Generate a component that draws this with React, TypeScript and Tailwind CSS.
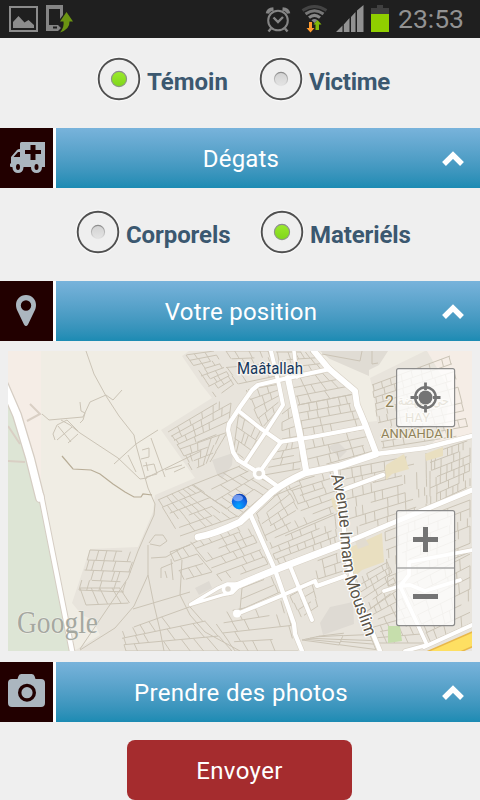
import React from "react";

type Pt = [number, number];

function RadioOption({ label, checked, className, textClass }: { label: string; checked: boolean; className: string; textClass: string }) {
  const id = label.replace(/[^a-z]/gi, "");
  return (
    <label className={`flex h-[46px] shrink-0 items-center ${className}`}>
      <svg width="46" height="46" viewBox="0 0 46 46" className="shrink-0">
        <defs>
          <linearGradient id={`dot${id}`} x1="0" y1="0" x2="0" y2="1">
            <stop offset="0" stopColor={checked ? "#9bea2c" : "#d2d2d2"} />
            <stop offset="1" stopColor={checked ? "#7fd61a" : "#e4e4e4"} />
          </linearGradient>
          <linearGradient id={`edge${id}`} x1="0" y1="0" x2="0" y2="1">
            <stop offset="0" stopColor="#8c8c8c" />
            <stop offset="1" stopColor={checked ? "#8a9a80" : "#e4e4e4"} />
          </linearGradient>
        </defs>
        <circle cx="23" cy="23" r="22.4" fill="#fafafa" />
        <circle cx="23" cy="23" r="20.300" fill="#efefef" stroke="#505050" strokeWidth="1.900" />
        <circle cx="23" cy="23" r={checked ? 7.6 : 6.6} fill={`url(#dot${id})`} stroke={`url(#edge${id})`} strokeWidth="1.100" />
      </svg>
      <span className={`relative top-[3px] ml-[5px] whitespace-nowrap text-[24px] leading-none font-bold text-[#3b5870] ${textClass}`}>{label}</span>
    </label>
  );
}

function SectionBar({ title, icon, textClass }: { title: string; icon: React.ReactNode; textClass: string }) {
  return (
    <div className="flex h-[60px] shrink-0 bg-white">
      <div className="w-[53px] shrink-0 bg-[#220000]">{icon}</div>
      <div className="ml-[3px] flex flex-1 items-center bg-gradient-to-b from-[#78b3db] to-[#1b8bb3]">
        <h2 className={`w-[370px] whitespace-nowrap pt-[2px] text-center text-[24px] leading-none font-normal text-white ${textClass}`}>{title}</h2>
        <svg width="54" height="24" viewBox="0 0 54 24">
          <path d="M18 18 27 9 36 18" fill="none" stroke="#fff" strokeWidth="5.400" />
        </svg>
      </div>
    </div>
  );
}

const AmbulanceIcon = (
  <svg width="53" height="60" viewBox="0 0 53 60">
    <path d="M20 15.500q0-1.500 1.500-1.500H45V39H11q-1 0-1-1v-2l1-1v-6l6-7q1-1 3-1z" fill="#abb6bf" />
    <path d="M20 24v5h-6.500l4.500-5zM30.500 17h5v5H41v4h-5.500v6h-5v-6H25v-4h5.500z" fill="#220000" />
    <g fill="#abb6bf">
      <circle cx="18" cy="39.500" r="5.500" />
      <circle cx="36.500" cy="39.500" r="5.500" />
    </g>
    <ellipse cx="18" cy="39" rx="2" ry="3" fill="#220000" />
    <ellipse cx="36.500" cy="39" rx="2" ry="3" fill="#220000" />
  </svg>
);

const PinIcon = (
  <svg width="53" height="60" viewBox="0 0 53 60">
    <path fillRule="evenodd" d="M26 14c-6 0-10 4.500-10 10 0 3 1 5 2 7l6 12.500q2 3 4 0L34 31c1-2 2-4 2-7 0-5.500-4-10-10-10zm0 5.300a5.200 5.200 0 1 1 0 10.400 5.200 5.200 0 0 1 0-10.400z" fill="#abb6bf" />
  </svg>
);

const CameraIcon = (
  <svg width="53" height="60" viewBox="0 0 53 60">
    <path d="M12 17h5.500l1-3q.7-2 3-2h10q2.300 0 3 2l1 3H41q4 0 4 4v20q0 4-4 4H12q-4 0-4-4V21q0-4 4-4z" fill="#abb6bf" />
    <circle cx="27" cy="30.700" r="7.300" fill="#abb6bf" stroke="#220000" strokeWidth="3.400" />
  </svg>
);

/** Each district is a quad (clockwise from top-left) with its row and column counts. */
const districts: { q: [Pt, Pt, Pt, Pt]; n: number; m: number }[] = [
  { q: [[186, 355], [214, 351], [234, 384], [216, 397]], n: 8, m: 3 },
  { q: [[214, 351], [268, 351], [276, 376], [238, 384]], n: 4, m: 5 },
  { q: [[168, 432], [232, 394], [228, 430], [180, 449]], n: 4, m: 6 },
  { q: [[180, 449], [228, 432], [210, 462], [192, 470]], n: 3, m: 5 },
  { q: [[246, 390], [280, 384], [282, 405], [262, 428]], n: 4, m: 3 },
  { q: [[238, 415], [262, 431], [246, 460], [233, 450]], n: 3, m: 3 },
  { q: [[276, 352], [312, 352], [328, 369], [280, 377]], n: 3, m: 6 },
  { q: [[291, 379], [330, 372], [354, 394], [298, 405]], n: 3, m: 5 },
  { q: [[298, 405], [355, 394], [365, 426], [302, 437]], n: 4, m: 6 },
  { q: [[302, 440], [366, 429], [373, 451], [309, 469]], n: 3, m: 6 },
  { q: [[282, 414], [295, 404], [300, 436], [282, 439]], n: 3, m: 2 },
  { q: [[281, 444], [300, 440], [304, 468], [264, 475]], n: 4, m: 3 },
  { q: [[192, 485], [240, 466], [274, 486], [238, 517]], n: 4, m: 6 },
  { q: [[158, 500], [192, 485], [238, 516], [180, 536]], n: 5, m: 7 },
  { q: [[190, 542], [246, 521], [268, 564], [222, 581]], n: 6, m: 6 },
  { q: [[170, 552], [190, 545], [212, 572], [183, 580]], n: 3, m: 3 },
  { q: [[256, 514], [286, 486], [307, 524], [267, 541]], n: 5, m: 4 },
  { q: [[288, 484], [332, 471], [341, 510], [307, 524]], n: 6, m: 4 },
  { q: [[268, 543], [341, 512], [344, 541], [278, 565]], n: 4, m: 9 },
  { q: [[340, 470], [426, 453], [427, 512], [347, 540]], n: 7, m: 8 },
  { q: [[372, 385], [450, 356], [470, 434], [382, 448]], n: 10, m: 8 },
  { q: [[430, 454], [470, 440], [470, 486], [430, 505]], n: 6, m: 7 },
  { q: [[385, 532], [470, 500], [470, 552], [388, 586]], n: 6, m: 8 },
  { q: [[242, 588], [273, 576], [280, 592], [240, 610]], n: 2, m: 2 },
  { q: [[210, 615], [284, 600], [298, 651], [235, 651]], n: 4, m: 5 },
  { q: [[314, 562], [344, 551], [346, 570], [318, 579]], n: 2, m: 3 },
  { q: [[290, 596], [312, 584], [318, 606], [300, 618]], n: 3, m: 3 },
  { q: [[302, 640], [320, 636], [368, 630], [376, 650]], n: 2, m: 4 },
  { q: [[355, 580], [388, 562], [398, 588], [366, 612]], n: 5, m: 5 },
  { q: [[366, 612], [399, 589], [425, 643], [378, 643]], n: 6, m: 5 },
  { q: [[405, 588], [470, 554], [470, 624], [430, 642]], n: 6, m: 5 },
  { q: [[120, 632], [192, 606], [232, 651], [126, 651]], n: 3, m: 7 },
  { q: [[90, 550], [138, 552], [124, 592], [79, 590]], n: 4, m: 5 },
  { q: [[80, 588], [120, 588], [130, 603], [86, 605]], n: 1, m: 4 },
];

function streetPath(q: [Pt, Pt, Pt, Pt], n: number, m: number, seed: number) {
  let s = seed * 7919 + 17;
  const rnd = () => {
    s = (s * 1103515245 + 12345) % 2147483648;
    return s / 2147483648;
  };
  const at = (u: number, v: number) => {
    const x = (q[0][0] * (1 - u) + q[1][0] * u) * (1 - v) + (q[3][0] * (1 - u) + q[2][0] * u) * v;
    const y = (q[0][1] * (1 - u) + q[1][1] * u) * (1 - v) + (q[3][1] * (1 - u) + q[2][1] * u) * v;
    return `${x.toFixed(1)} ${y.toFixed(1)}`;
  };
  let d = "";
  for (let i = 0; i <= n; i++) {
    const a = rnd() < 0.35 ? rnd() * 0.4 : 0;
    const b = rnd() < 0.35 ? 1 - rnd() * 0.4 : 1;
    d += `M${at(a, i / n)}L${at(b, i / n)}`;
  }
  for (let i = 0; i < n; i++) {
    for (let j = 0; j <= m; j++) {
      if (rnd() < 0.25) continue;
      const u = Math.min(1, Math.max(0, (j + (rnd() - 0.5) * 0.5) / m));
      d += `M${at(u, i / n)}L${at(u, (i + 1) / n)}`;
    }
  }
  return d;
}

const roads: [string, number][] = [
  ["M271 351 279 385 283 405 265 433 245 463", 4],
  ["M330 369 288 378 258 385 252 390 240 407 229 424 228 430 233 452 238 460 259 473 277 486", 4.300],
  ["M240 412 260 428 280 442 312 437 365 427", 4],
  ["M281 442 259 473", 4],
  ["M294 351 297 377", 3.500],
  ["M288 378 300 435 306 470", 6.200],
  ["M314 351 329 369 355 391 357 405 365 424 376 453", 6],
  ["M376 454 425 448 472 436", 4.500],
  ["M198 537 Q215 534 240 522L272 492 Q285 482 305 473L340 466 376 454", 6.800],
  ["M345 489 383 475", 4.500],
  ["M335 468 343 510 345 550 355 590 380 651", 4.500],
  ["M234 587 Q250 580 280 568L340 545", 6.800],
  ["M340 545 395 522 472 490", 5],
  ["M190.500 604.500 218 588 227 584 240 584M190.500 604.500 222 595 232 593 242 583", 3.300],
  ["M251 516 275 570 294 624 295 634 302 651", 4.400],
  ["M290 566 312 620", 4],
  ["M237 614 283 595 315 581 317 586 345 576", 4],
  ["M384 591 400 586 427 645 405 651M400 586 409 575 409 562 472 550M400 586 410 585 425 591 460 580", 3.800],
  ["M424 647 472 625", 4],
];

function CityMap() {
  return (
    <svg width="464" height="300" viewBox="8 351 464 300" className="block" fontFamily='Roboto, "Noto Sans", sans-serif'>
      <defs>
        <radialGradient id="gps" cx="0.45" cy="0.8" r="0.8">
          <stop offset="0" stopColor="#00a8ff" />
          <stop offset="0.6" stopColor="#126be8" />
          <stop offset="1" stopColor="#073bb0" />
        </radialGradient>
        <path id="avenue" d="M331 475 Q339 505 340 530 T346 582 L367 640" />
      </defs>
      <rect x="8" y="351" width="464" height="300" fill="#f0ede4" />
      <path d="M8 351H41V500L8 395z" fill="#f5ede6" />
      <path d="M8 402 22 440 40 501 71 651H8z" fill="#dde5d5" />
      <path d="M189 351 182 356 201 384 212 398 161 430 195 478 155 495 153 512 138 547 90 549 72 603 82 615 93 620 100 635 74 651H472V351z" fill="#e8e4dc" />
      <path d="M314 351 330 369 352 387 357 408 368 422 377 421 373 390 370 378 425 351z" fill="#f0ede4" />
      <path d="M320 351 330 359 369 376 369 370 379 365 388 351z" fill="#e0dcd4" />
      <path d="M427 351H472V435L427 449 445 430 450 390z" fill="#f5ede6" />
      <path d="M212 460 233 453 232 465 222 479 217 474zM195 588 209 581 212 588 199 595zM328 447 338 442 347 451 340 458zM320 623 330 607 353 602 354 624 323 635z" fill="#dedad3" />
      <g fill="none" stroke="#cbc4b6" strokeWidth="1">
        {districts.map((d, i) => (
          <path key={i} d={streetPath(d.q, d.n, d.m, i + 1)} />
        ))}
        <path d="M86 351 94 374 106 396 119 416 134 435 136 445 142 467 148 488 155 504 154 515 145 535 138 551 128 578M122 390 113 400 106 395 90 402 83 417 49 420 42 414M80 402 81 411 85 413 83 420 80 423M61 420 70 425 80 433 118 458 140 479 147 478M55 440 53 434 57 425 67 420 78 431M57 440 72 427M58 426 71 442M68 443 78 434M114 464 136 444 158 430M151 438 160 463 165 477M128 455 136 472M146 478 201 451M174 472 185 467M148 545 148 575 154 605 160 630 164 651M128 578 80 649M148 575 134 606 115 628 80 650M133 609 190 592M182 560 180 595 190 615 205 632 240 651M151 558 166 557 182 548 200 540M149 543 155 535 163 535 167 541 160 546 150 544M251 515 264 500 300 485" />
        <path d="M142 450 149 448 149 457 141 459M143 466 154 464 157 474 146 477M146 462 148 471M165 470 182 465M161 578 161 568 173 563M165 571 167 578M171 559 173 580" />
        <path d="M322 354 360 361 362 351M372 351V364L378 363" />
      </g>
      <path d="M62 456 73 469 91 470 100 474 113 484 125 492 134 497 141 497 143 494 152 495" fill="none" stroke="#b8ad97" strokeWidth="1.200" />
      <path d="M30 404 40 414 27 421M8 426 20 444M8 461 25 462" fill="none" stroke="#d9cfc4" strokeWidth="2" />
      <g fill="#e9dfc0">
        <path d="M385 469 386 465 404 454 409 469 392 474 386 480z" />
        <path d="M351 547 382 533 384 562 362 570 353 578 349 565z" />
        <path d="M331 498 336 497 338 514 333 507zM425 454 443 447 443 456 426 461z" />
      </g>
      <path d="M355 541 365 538 369 545 358 549z" fill="#e2dcd0" />
      <path d="M388 626H400L402 641 388 643z" fill="#c6deac" />
      <g fill="none" strokeLinejoin="round" strokeLinecap="round">
        <path d="M4 385 17 415 30 458 40 498" stroke="#d5cdc3" strokeWidth="10" />
        <path d="M41 495 72 651" stroke="#d5cdc3" strokeWidth="6.500" />
        {roads.map(([d, w], i) => (
          <path key={i} d={d} stroke="#d9d2c6" strokeWidth={w + 1.2} />
        ))}
        <path d="M4 385 17 415 30 458 40 498" stroke="#fff" strokeWidth="7.500" />
        <path d="M41 495 72 651" stroke="#fff" strokeWidth="4.500" />
        {roads.map(([d, w], i) => (
          <path key={i} d={d} stroke="#fff" strokeWidth={w} />
        ))}
        <path d="M425 660 480 636" stroke="#e9b84a" strokeWidth="15" />
        <path d="M425 660 480 636" stroke="#fedf62" strokeWidth="12" />
        <circle cx="259" cy="473.500" r="4.500" fill="#ddd8cf" stroke="#fff" strokeWidth="3.500" />
        <circle cx="228" cy="589" r="4.500" fill="#ddd8cf" stroke="#fff" strokeWidth="3.500" />
        <circle cx="237" cy="613.500" r="2" fill="#fff" stroke="#fff" strokeWidth="4" />
      </g>

      <g paintOrder="stroke" strokeLinejoin="round">
        <text x="237" y="374" fontSize="16.500" textLength="66" lengthAdjust="spacingAndGlyphs" fill="#15375c" stroke="#f5f3ee" strokeWidth="3">Maâtallah</text>
        <g fill="#8f8259" stroke="#f3efe6" strokeWidth="2.500">
          <text x="385" y="407" fontSize="16">2</text>
          <text x="398" y="405" fontSize="13" textLength="51" lengthAdjust="spacingAndGlyphs" fontFamily='"DejaVu Sans", sans-serif'>حي النهضة</text>
          <text x="405" y="422" fontSize="13.500" textLength="25" lengthAdjust="spacingAndGlyphs">HAY</text>
          <text x="381" y="438" fontSize="13.500" textLength="72" lengthAdjust="spacingAndGlyphs">ANNAHDA II</text>
        </g>
        <text fontSize="17" fill="#5b554a" stroke="#fff" strokeWidth="2.500">
          <textPath href="#avenue" textLength="167" lengthAdjust="spacingAndGlyphs">Avenue Imam Mouslim</textPath>
        </text>
      </g>

      <circle cx="239.500" cy="501.500" r="7.700" fill="url(#gps)" />
      <ellipse cx="238" cy="498" rx="5" ry="3.300" fill="#a9bfff" opacity="0.65" />

      <text x="17" y="633" fontFamily='"Liberation Serif", serif' fontSize="31" textLength="81" lengthAdjust="spacingAndGlyphs" fill="#a5a8a0" stroke="#f2f1ec" strokeWidth="1" paintOrder="stroke">Google</text>

      <g fill="#fff" fillOpacity="0.78" stroke="#8c8c8c" strokeWidth="1.200">
        <rect x="396.600" y="368.600" width="58" height="58" rx="2" />
        <rect x="396.600" y="510.600" width="58" height="115" rx="2" />
      </g>
      <path d="M397 568H454" stroke="#a8a8a8" strokeWidth="1.500" />
      <g fill="none" stroke="#747474">
        <circle cx="425.500" cy="397.500" r="10.300" strokeWidth="2.400" />
        <path d="M425.500 382.500V390M425.500 405V412.500M410.500 397.500H418M433 397.500H440.500" strokeWidth="2.800" />
        <path d="M413 539.500H438M425.500 527V552M413 596.500H438" strokeWidth="5" />
      </g>
      <circle cx="425.500" cy="397.500" r="7" fill="#747474" />
    </svg>
  );
}

function StatusBar() {
  return (
    <header className="flex h-[38px] shrink-0 items-center bg-[#1f1f1f]">
      <svg width="80" height="38" viewBox="0 0 80 38">
        <rect x="10" y="7" width="27" height="24" fill="none" stroke="#8c8c8c" strokeWidth="2" />
        <path d="M13 28V22l5.500-6 6 6.500 4-2.500 5.500 5v3z" fill="#8c8c8c" />
        <path d="M46 5H63V15L60 19V9H49V25H58L61 28 58 31H46z" fill="#858585" />
        <rect x="53" y="26.500" width="4" height="2" fill="#1f1f1f" />
        <path d="M66.500 12 73 21.500H69.500Q70 29 60 32.500 64.500 27 63.500 21.500H60z" fill="#6b9412" />
      </svg>
      <div className="flex-1" />
      <svg width="138" height="38" viewBox="260 0 138 38">
        <g fill="none" stroke="#858585" strokeWidth="2">
          <circle cx="278" cy="20.500" r="9.800" />
          <path d="M273.500 17.500 278 22 283 17M271 28.500 268.500 31.500M285 28.500 287.500 31.500" strokeWidth="2.400" />
          <path d="M267.500 13.500Q268 9.500 273.500 9M288.500 13.500Q288 9.500 282.500 9" strokeWidth="3.600" />
        </g>
        <g fill="none" strokeWidth="3">
          <path d="M302.500 10.500Q314.500 2.500 326.500 10.500" stroke="#444" />
          <path d="M305.500 14Q314.500 7.500 323.500 14" stroke="#777" />
          <path d="M309 17.700Q314.500 13 320 17.700" stroke="#888" />
        </g>
        <path d="M311.500 20.300Q314.500 17.500 317.500 20.300L314.500 23z" fill="#888" />
        <path d="M309 22H312V28H314.500L310.500 32.500 306.500 28H309z" fill="#ff9b2f" />
        <path d="M315.500 30V24.500H313.500L317.500 20 321.500 24.500H319V30z" fill="#83ba0a" />
        <path d="M336 32 342.500 25.500V32zM343.800 24.500 349.500 18V32H343.800zM351 17 355.500 12V32H351zM357 10.500 363.500 5V32H357z" fill="#929292" />
        <path d="M371 8H377V5H383V8H389V14H371z" fill="#404040" />
        <rect x="371" y="14" width="18" height="18" fill="#90cf00" />
      </svg>
      <time className="w-[82px] whitespace-nowrap text-[26.500px] leading-none text-[#929292]">23:53</time>
    </header>
  );
}

export default function App() {
  return (
    <main className="flex h-[800px] w-[480px] flex-col overflow-hidden bg-[#efefef] font-['Roboto',sans-serif]">
      <StatusBar />
      <div className="flex h-[90px] shrink-0 pt-[18px] pl-[96px]">
        <RadioOption label="Témoin" checked className="w-[162px]" textClass="" />
        <RadioOption label="Victime" checked={false} className="" textClass="tracking-[-0.25px]" />
      </div>
      <SectionBar title="Dégats" icon={AmbulanceIcon} textClass="tracking-[0.2px]" />
      <div className="flex h-[93px] shrink-0 pt-[21px] pl-[75px]">
        <RadioOption label="Corporels" checked={false} className="w-[184px]" textClass="tracking-[-0.1px]" />
        <RadioOption label="Materiéls" checked className="" textClass="tracking-[-0.1px]" />
      </div>
      <SectionBar title="Votre position" icon={PinIcon} textClass="tracking-[0.25px]" />
      <div className="shrink-0 px-2 pt-[10px] pb-[11px]">
        <CityMap />
      </div>
      <SectionBar title="Prendre des photos" icon={CameraIcon} textClass="tracking-[0.35px]" />
      <button className="mt-[18px] ml-[127px] h-[60px] w-[225px] shrink-0 rounded-[8px] bg-[#a52c2e] pt-[2px] text-[24px] leading-none tracking-[0.4px] text-white">Envoyer</button>
    </main>
  );
}
